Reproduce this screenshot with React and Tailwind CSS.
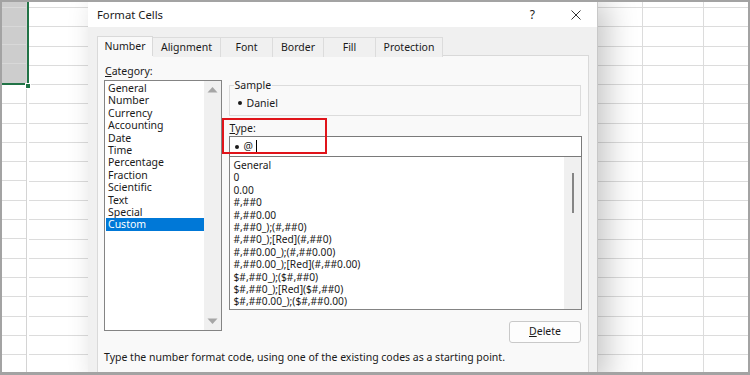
import React from "react";

const categories = [
  "General", "Number", "Currency", "Accounting", "Date", "Time",
  "Percentage", "Fraction", "Scientific", "Text", "Special", "Custom",
];

const formats = [
  "General",
  "0",
  "0.00",
  "#,##0",
  "#,##0.00",
  "#,##0_);(#,##0)",
  "#,##0_);[Red](#,##0)",
  "#,##0.00_);(#,##0.00)",
  "#,##0.00_);[Red](#,##0.00)",
  "$#,##0_);($#,##0)",
  "$#,##0_);[Red]($#,##0)",
  "$#,##0.00_);($#,##0.00)",
];

const tabs = ["Number", "Alignment", "Font", "Border", "Fill", "Protection"];
const tabWidths = ["w-[56px]", "w-[68px]", "w-[52px]", "w-[51px]", "w-[52px]", "w-[67px]"];

function Sheet() {
  const rows = Array.from({ length: 20 });
  return (
    <div className="absolute inset-0 flex">
      <div className="w-[25px] flex flex-col border-r border-[#d4d4d4]">
        <div className="h-[83px] bg-[#cdcdcd] flex flex-col border-b-2 border-[#217346]">
          <div className="h-[6px] border-b border-[#dadada]" />
          {rows.slice(0, 4).map((_, i) => (
            <div key={i} className="h-[19.3px] border-b border-[#d8d8d8] last:border-b-0" />
          ))}
        </div>
        {rows.slice(0, 15).map((_, i) => (
          <div key={i} className="h-[19.3px] shrink-0 border-b border-[#dcdcdc]" />
        ))}
      </div>
      <div className="w-[2px] h-[83px] bg-[#217346]" />
      <div className="flex-1 flex flex-col">
        <div className="h-[6px] shrink-0 border-b border-[#dcdcdc]" />
        {rows.map((_, i) => (
          <div key={i} className="h-[19.3px] shrink-0 border-b border-[#dcdcdc]" />
        ))}
      </div>
      <div className="absolute left-[23px] top-[81px] w-[6px] h-[6px] bg-[#217346] border border-white" />
      <div className="absolute left-[640px] top-0 bottom-0 w-px bg-[#dcdcdc]" />
      <div className="absolute left-[701px] top-0 bottom-0 w-px bg-[#dcdcdc]" />
    </div>
  );
}

function ScrollArrow({ up }) {
  return (
    <svg width="11" height="7" viewBox="0 0 11 7">
      <path d={up ? "M0.5 6.5 L5.5 1 L10.5 6.5 Z" : "M0.5 0.5 L5.5 6 L10.5 0.5 Z"} fill="#a6a6a6" />
    </svg>
  );
}

function Dot() {
  return <span className="inline-block w-[4px] h-[4px] rounded-full bg-[#1a1a1a] mr-[5px] align-middle" />;
}

export default function App() {
  return (
    <div
      className="relative w-[750px] h-[375px] overflow-hidden bg-white border-2 border-b-[3px] border-[#a3a3a3] text-[#1a1a1a]"
      style={{ fontFamily: '"Noto Sans", "Open Sans", sans-serif' }}
    >
      <Sheet />

      {/* dialog */}
      <div className="absolute left-[86px] top-0 w-[510px] h-[380px] flex flex-col bg-[#f0f0f0] border-r border-[#c8c8c8] shadow-[10px_0_28px_rgba(0,0,0,0.22)]">
        <div className="h-[25px] shrink-0 bg-white flex items-center pl-[9px] pr-[14px]">
          <span className="text-[11.3px] leading-none">Format Cells</span>
          <span className="ml-auto text-[12px] leading-none mr-[36px]">?</span>
          <svg width="10" height="10" viewBox="0 0 10 10" className="mr-[2px]">
            <path d="M0.5 0.5 L9.5 9.5 M9.5 0.5 L0.5 9.5" stroke="#333" strokeWidth="1" />
          </svg>
        </div>

        <div className="flex-1 flex flex-col pt-[9px] pl-[9px] pr-[8px]">
          {/* tabs */}
          <div className="flex h-[19px] relative z-10">
            {tabs.map((t, i) => (
              <div
                key={t}
                className={
                  "h-[20px] flex items-center justify-center text-[10.5px] border border-b-0 " +
                  tabWidths[i] +
                  (i === 0
                    ? " bg-[#f9f9f9] border-[#d9d9d9]"
                    : " bg-[#f0f0f0] border-[#dcdcdc] border-l-0 mt-[1px] h-[18px]")
                }
              >
                {t}
              </div>
            ))}
          </div>

          <div className="flex-1 bg-[#f9f9f9] border border-[#d9d9d9] flex flex-col pl-[6px] pr-[6px] pt-[8px]">
            <div className="flex gap-[7px]">
              {/* category */}
              <div className="w-[118px] flex flex-col">
                <div className="text-[10.5px] leading-[14px] h-[16px] ml-[1px]">
                  <span className="underline underline-offset-1">C</span>ategory:
                </div>
                <div className="h-[251px] bg-white border border-[#848484] flex">
                  <div className="flex-1 flex flex-col pt-[1px] pl-[1px]">
                    {categories.map((c) => (
                      <div
                        key={c}
                        className={
                          "h-[12.4px] leading-[12.4px] text-[10.5px] pl-[2px] " +
                          (c === "Custom" ? "bg-[#0078d7] text-white" : "")
                        }
                      >
                        {c}
                      </div>
                    ))}
                  </div>
                  <div className="w-[17px] bg-[#f0f0f0] flex flex-col items-center justify-between pt-[5px] pb-[5px]">
                    <ScrollArrow up />
                    <ScrollArrow />
                  </div>
                </div>
              </div>

              {/* right side */}
              <div className="w-[355px] flex flex-col pt-[16px]">
                <div className="relative h-[31px] border border-[#dcdcdc] mt-[5px] mr-[1px]">
                  <span className="absolute -top-[7px] left-[4px] px-[1px] bg-[#f9f9f9] text-[10.5px] leading-[12px]">
                    Sample
                  </span>
                  <div className="pt-[10px] pl-[8px] text-[10.5px] leading-[14px] flex items-center">
                    <Dot />Daniel
                  </div>
                </div>

                <div className="relative mt-[5px]">
                  <div className="text-[10.5px] leading-[14px] h-[15px] pl-[1px]">
                    <span className="underline underline-offset-1">T</span>ype:
                  </div>
                  <div className="h-[21px] bg-white border border-[#7a7a7a] flex items-center pl-[5px] text-[10.5px]">
                    <Dot />@
                    <span className="ml-[3px] w-px h-[13px] bg-black" />
                  </div>
                  <div className="absolute -left-[7px] -top-[3px] w-[105px] h-[36px] border-2 border-[#e0141a]" />
                </div>

                <div className="h-[153px] bg-white border border-[#848484] border-t-0 flex">
                  <div className="flex-1 flex flex-col pt-[2px] pl-[4px]">
                    {formats.map((f) => (
                      <div key={f} className="h-[12.4px] leading-[12.4px] text-[10.2px] whitespace-nowrap">
                        {f}
                      </div>
                    ))}
                  </div>
                  <div className="w-[17px] bg-[#f0f0f0] flex justify-center pt-[16px]">
                    <div className="w-[2px] h-[40px] bg-[#858585]" />
                  </div>
                </div>

                <div className="flex justify-end mt-[11px]">
                  <div className="w-[72px] h-[22px] bg-[#fdfdfd] border border-[#c9c9c9] rounded-[3px] flex items-center justify-center text-[10.5px] mr-[1px]">
                    <span className="underline underline-offset-1">D</span>elete
                  </div>
                </div>
              </div>
            </div>

            <div className="text-[10.5px] mt-[7px] leading-[14px]">
              Type the number format code, using one of the existing codes as a starting point.
            </div>
          </div>
        </div>
      </div>
    </div>
  );
}
